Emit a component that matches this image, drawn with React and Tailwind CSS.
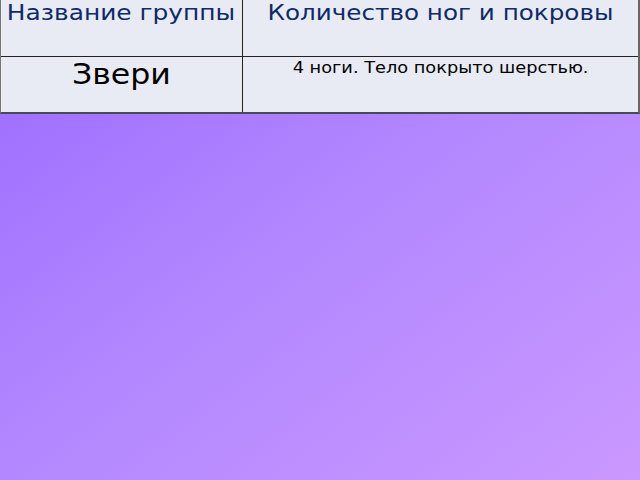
export default function App() {

  const font = { fontFamily: '"DejaVu Sans", Verdana, sans-serif' }

  return (

    <div
      className="w-[640px] h-[480px] bg-gradient-to-br from-[#9b69ff] via-[#b388ff] to-[#ca98ff] overflow-hidden"
      style={font}
    >

      {/* таблица */}
      <div className="w-[640px] grid grid-cols-[242px_1fr] bg-[#e8ebf4] border-l border-l-[#777] border-r-2 border-r-[#666] border-b-2 border-b-[#4a4a55]">

        <div className="h-[57px] border-r border-b border-[#222] text-center text-[22px] leading-[26px] text-[#102a68]">
          <span className="inline-block scale-x-[1.13]">Название группы</span>
        </div>

        <div className="h-[57px] border-b border-[#222] text-center text-[22px] leading-[26px] text-[#102a68]">
          <span className="inline-block scale-x-[1.12]">Количество ног и покровы</span>
        </div>

        <div className="h-[55px] border-r border-[#222] text-center text-[29px] leading-[34px] text-black">
          <span className="inline-block scale-x-[1.09]">Звери</span>
        </div>

        <div className="h-[55px] text-center text-[16.5px] leading-[20px] pt-[1px] text-black">
          <span className="inline-block scale-x-[1.075]">4 ноги. Тело покрыто шерстью.</span>
        </div>

      </div>

    </div>

  )

}
